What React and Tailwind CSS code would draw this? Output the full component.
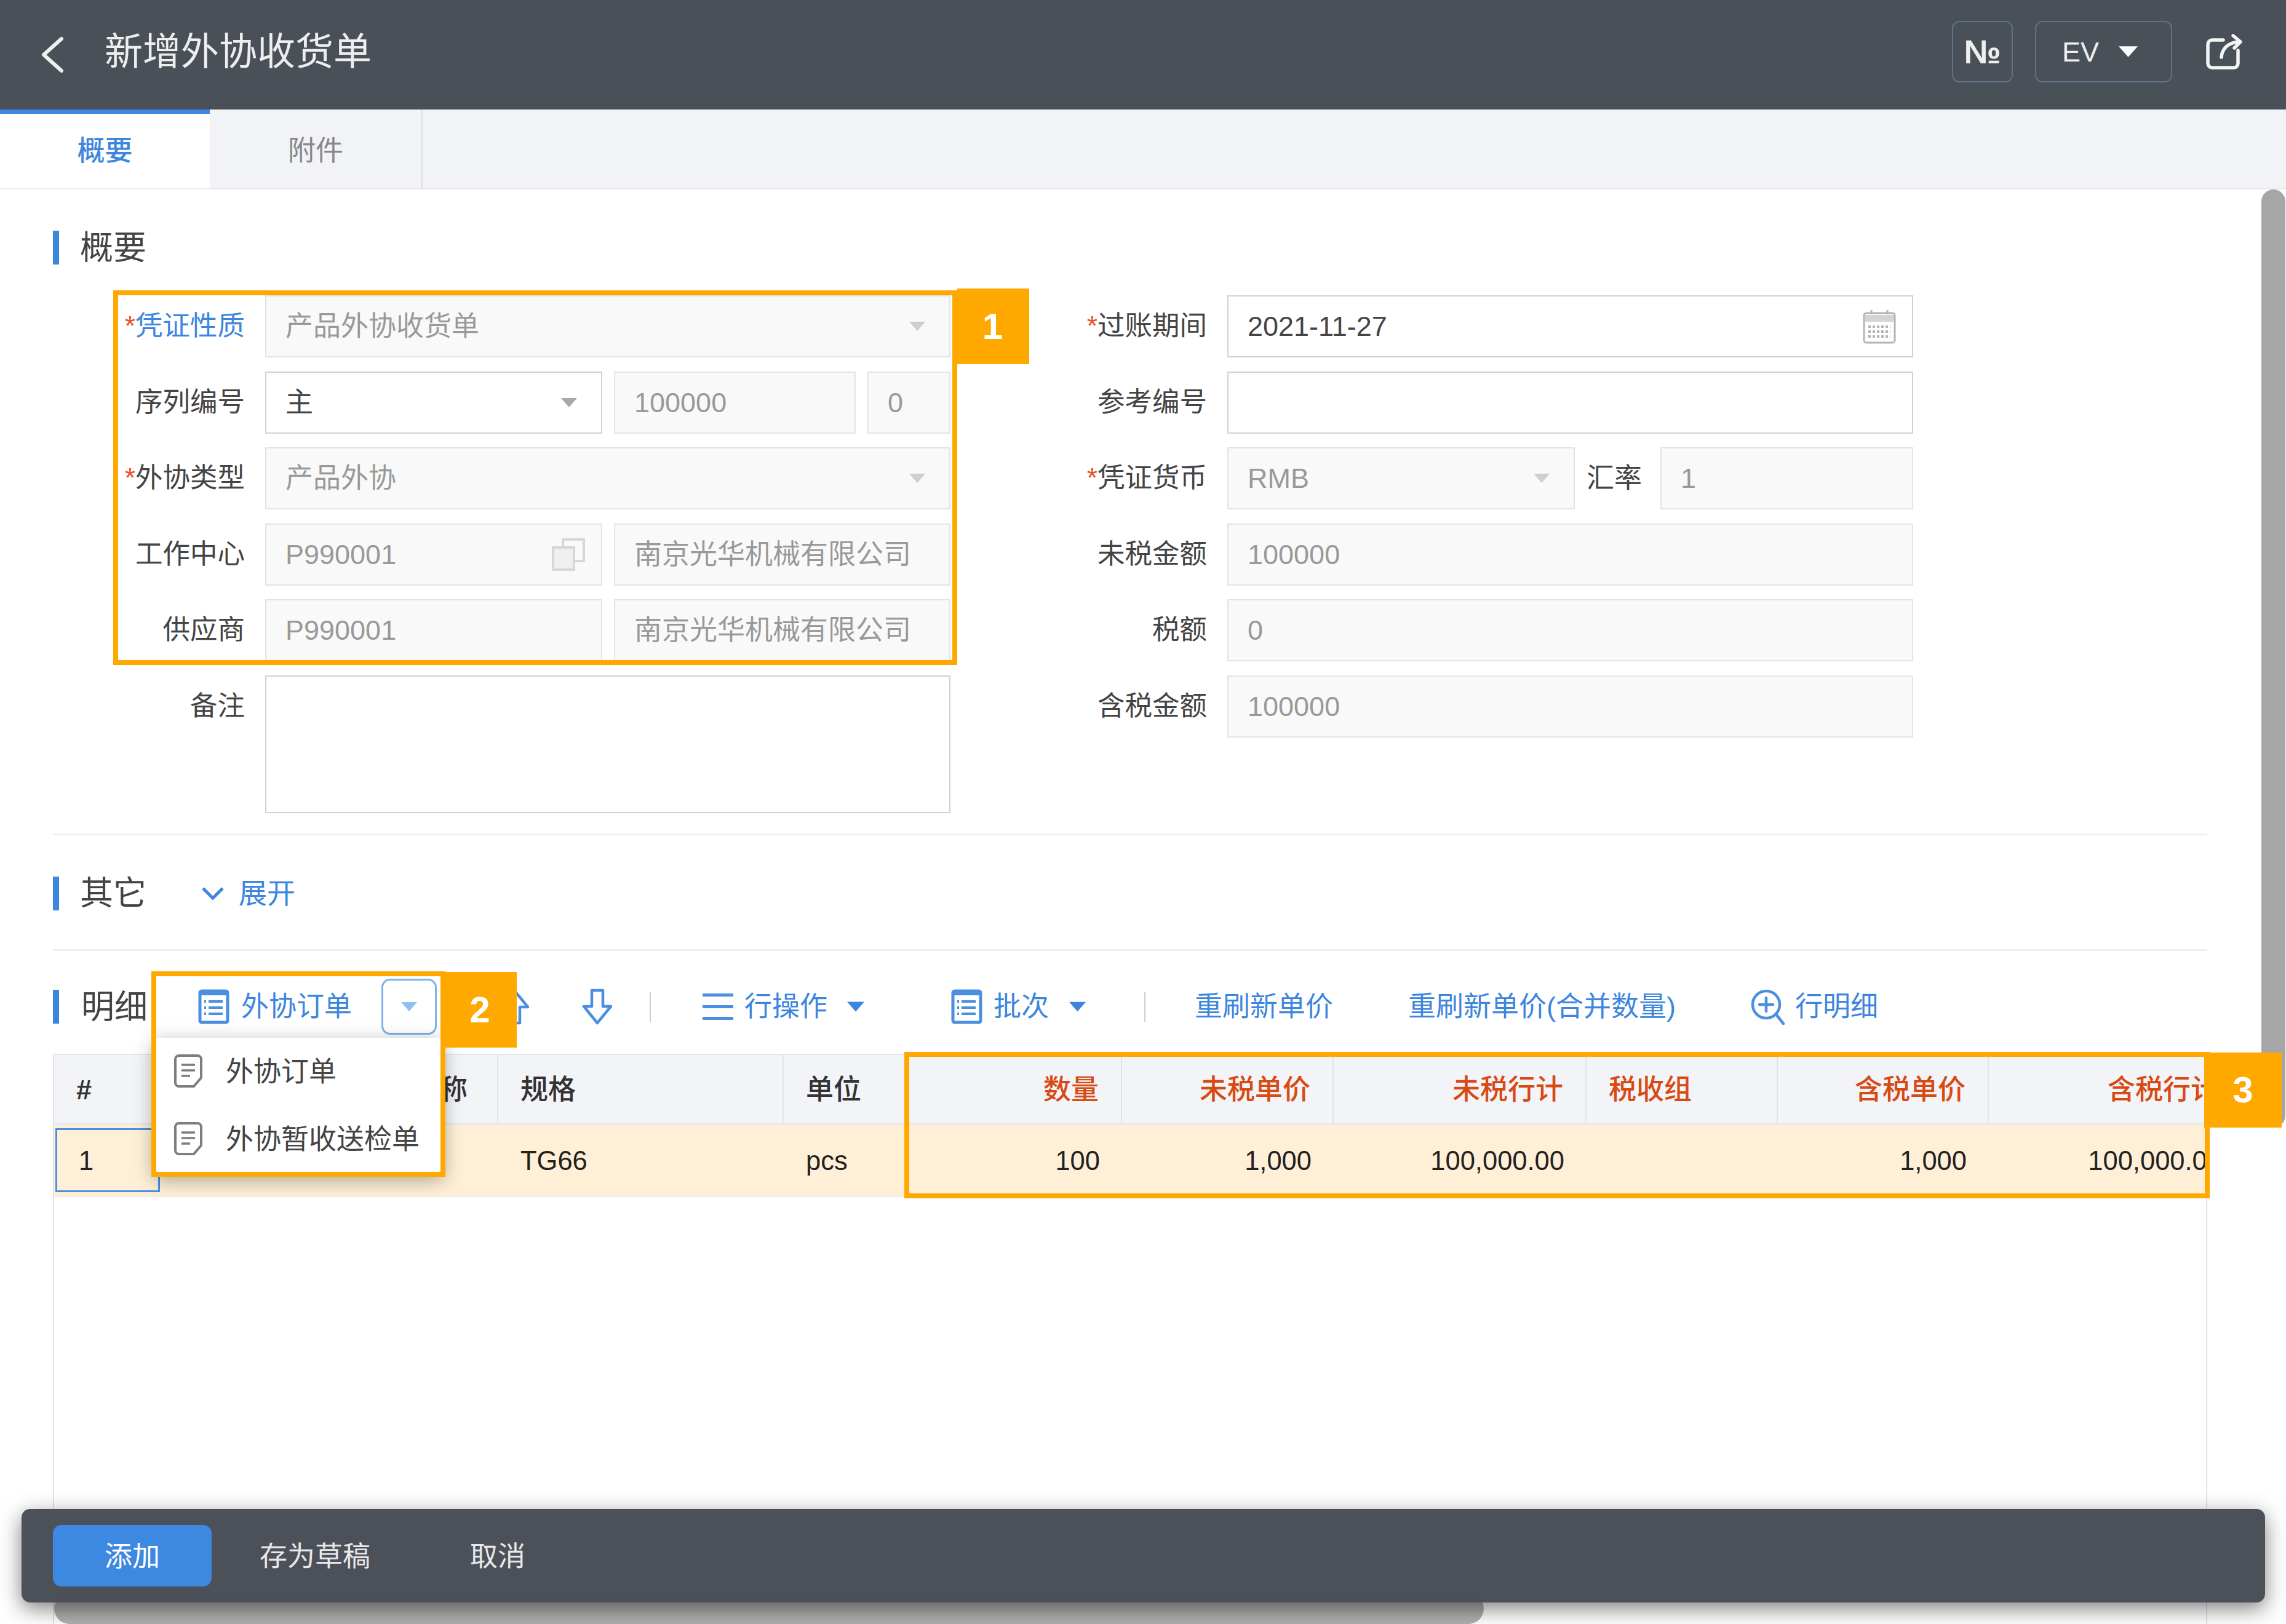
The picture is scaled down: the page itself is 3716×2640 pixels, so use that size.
import React from "react";

function Caret({ className = "" }) {
  return (
    <svg viewBox="0 0 28 16" className={className}>
      <path d="M0 0 H28 L14 16 Z" fill="currentColor" />
    </svg>
  );
}

function ListIcon({ className = "" }) {
  return (
    <svg viewBox="0 0 51 57" className={className} fill="none" stroke="#4a8fe0">
      <rect x="3" y="3" width="45" height="51" rx="3" strokeWidth="5" />
      <path d="M3 7 H48" strokeWidth="6" />
      <path d="M17 20 H40 M17 30 H40 M17 40 H40" strokeWidth="4" />
      <path d="M10 20 H13 M10 30 H13 M10 40 H13" strokeWidth="4" />
    </svg>
  );
}

function DocIcon({ className = "" }) {
  return (
    <svg viewBox="0 0 46 56" className={className} fill="none" stroke="#7d7d7d" strokeWidth="4">
      <path d="M8 2 H38 a6 6 0 0 1 6 6 V38 L32 52 H8 a6 6 0 0 1 -6 -6 V8 a6 6 0 0 1 6 -6 Z" />
      <path d="M12 17 H34 M12 26 H34 M12 35 H26" strokeWidth="3.5" />
    </svg>
  );
}

function ArrowIcon({ className = "" }) {
  return (
    <svg viewBox="0 0 50 59" className={className} fill="none" stroke="#4a8fe0" strokeWidth="4.5" strokeLinejoin="round">
      <path d="M16 3 H34 V29 H47 L25 56 L3 29 H16 Z" />
    </svg>
  );
}

function Field({ children, muted = true, caret, icon, className = "" }) {
  return (
    <div
      className={`flex h-full items-center justify-between border-2 pl-[31px] ${
        muted ? "border-[#e4e4e4] bg-[#f9f9f9] text-[#999]" : "border-[#d2d2d2] bg-white text-[#444]"
      } ${className}`}
    >
      <span className="whitespace-nowrap">{children}</span>
      {caret && (
        <Caret className={`mr-[38px] h-[15px] w-[28px] ${muted ? "text-[#cfcfcf]" : "text-[#a8a8a8]"}`} />
      )}
      {icon}
    </div>
  );
}

function Row({ label, req, blue, wide, children }) {
  return (
    <div className="flex h-[101px]">
      <div
        className={`flex shrink-0 items-center justify-end whitespace-nowrap text-[44.5px] ${wide ? "w-[350px]" : "w-[312px]"} ${
          blue ? "text-[#3d86de]" : "text-[#444]"
        }`}
      >
        {req && <span className="text-[#e8502a]">*</span>}
        {label}
      </div>
      <div className={`ml-[33px] flex gap-[19px] ${wide ? "w-[1115px]" : "w-[1114px]"}`}>{children}</div>
    </div>
  );
}

function SectionBar() {
  return <div className="h-[55px] w-[10px] shrink-0 bg-[#3d86de]" />;
}

function HeadCell({ children, className = "" }) {
  return <div className={`flex h-full shrink-0 items-center border-r-2 border-[#dfe3ea] pt-[2px] ${className}`}>{children}</div>;
}

function RowCell({ children, className = "" }) {
  return <div className={`flex h-full shrink-0 items-center pt-[5px] ${className}`}>{children}</div>;
}

export default function App() {
  return (
    <div className="relative flex h-[2640px] w-[3716px] flex-col overflow-hidden bg-white text-[45px] leading-none text-[#444] [font-family:'Liberation_Sans','Noto_Sans_CJK_SC',sans-serif]">
      {/* top bar */}
      <header className="flex h-[178px] shrink-0 items-center bg-[#4a5058] text-[#eee]">
        <svg viewBox="0 0 36 60" className="ml-[67px] h-[60px] w-[36px]" fill="none" stroke="#f0f0f0" strokeWidth="6" strokeLinecap="round" strokeLinejoin="round">
          <path d="M33 4 L4 30 L33 56" />
        </svg>
        <h1 className="mb-[8px] ml-[67px] text-[62px] font-normal">新增外协收货单</h1>
        <div className="mb-[10px] ml-auto flex items-center">
          <div className="flex h-[100px] w-[99px] items-center justify-center rounded-[12px] border-2 border-[#5f7388] text-[54px] font-bold">
            №
          </div>
          <div className="ml-[36px] flex h-[100px] w-[223px] items-center rounded-[12px] border-2 border-[#5f7388] pl-[42px]">
            EV
            <Caret className="ml-[32px] h-[18px] w-[31px] text-white" />
          </div>
          <svg viewBox="0 0 59 58" className="ml-[55px] mr-[71px] h-[58px] w-[59px]" fill="none" stroke="#f4f4f4" strokeWidth="5.5" strokeLinecap="round" strokeLinejoin="round">
            <path d="M28 10 H10 a7 7 0 0 0 -7 7 V48 a7 7 0 0 0 7 7 H45 a7 7 0 0 0 7 -7 V27" />
            <path d="M25 38 C26 24 36 14 54 13" />
            <path d="M44 3 L56 13 L46 23" />
          </svg>
        </div>
      </header>

      {/* tabs */}
      <nav className="flex h-[130px] shrink-0 border-b-2 border-[#e9eaee] bg-[#f2f3f7]">
        <div className="flex w-[341px] items-center justify-center border-t-[7px] border-[#3d86de] bg-white font-medium text-[#3d86de]">
          概要
        </div>
        <div className="flex w-[346px] items-center justify-center border-r-2 border-[#dcdee5] pt-[7px] text-[#888]">附件</div>
      </nav>

      <main className="ml-[86px] mr-[128px] flex min-h-0 flex-1 flex-col">
        <div className="mt-[67px] flex items-center">
          <SectionBar />
          <span className="ml-[34px] text-[54px] text-[#444]">概要</span>
        </div>

        {/* voucher form */}
        <div className="mt-[50px] flex">
          <div className="flex w-[1459px] shrink-0 flex-col gap-[22.5px]">
            <Row label="凭证性质" req blue>
              <Field caret className="flex-1">产品外协收货单</Field>
            </Row>
            <Row label="序列编号">
              <Field muted={false} caret className="w-[548px]">主</Field>
              <Field className="w-[393px]">100000</Field>
              <Field className="flex-1">0</Field>
            </Row>
            <Row label="外协类型" req>
              <Field caret className="flex-1">产品外协</Field>
            </Row>
            <Row label="工作中心">
              <Field
                className="w-[548px]"
                icon={
                  <svg viewBox="0 0 54 54" className="mr-[26px] h-[54px] w-[54px]" fill="none" stroke="#d8d8d8" strokeWidth="4">
                    <rect x="2" y="16" width="34" height="36" fill="#f0f0f0" />
                    <path d="M18 16 V3 H52 V38 H36" />
                  </svg>
                }
              >
                P990001
              </Field>
              <Field className="flex-1">南京光华机械有限公司</Field>
            </Row>
            <Row label="供应商">
              <Field className="w-[548px]">P990001</Field>
              <Field className="flex-1">南京光华机械有限公司</Field>
            </Row>
            <div className="flex">
              <div className="flex h-[101px] w-[312px] shrink-0 items-center justify-end text-[44.5px] text-[#444]">备注</div>
              <div className="ml-[33px] h-[224px] w-[1114px] border-2 border-[#d2d2d2]" />
            </div>
          </div>

          <div className="ml-[67px] flex flex-col gap-[22.5px]">
            <Row label="过账期间" req wide>
              <Field
                muted={false}
                className="flex-1"
                icon={
                  <svg viewBox="0 0 54 56" className="mr-[26px] h-[56px] w-[54px]" fill="none" stroke="#b4b4b4" strokeWidth="3">
                    <rect x="2" y="6" width="50" height="48" rx="4" />
                    <path d="M3 9 H51 V20 H3 Z" fill="#d4d4d4" stroke="none" />
                    <path d="M14 1 V8 M40 1 V8" />
                    <path d="M9 28 H45 M9 36 H45 M9 44 H45" strokeWidth="4" strokeDasharray="4 3" />
                  </svg>
                }
              >
                2021-11-27
              </Field>
            </Row>
            <Row label="参考编号" wide>
              <Field muted={false} className="flex-1" />
            </Row>
            <Row label="凭证货币" req wide>
              <Field caret className="w-[565px]">RMB</Field>
              <div className="flex w-[101px] shrink-0 items-center text-[#444]">汇率</div>
              <Field className="flex-1">1</Field>
            </Row>
            <Row label="未税金额" wide>
              <Field className="flex-1">100000</Field>
            </Row>
            <Row label="税额" wide>
              <Field className="flex-1">0</Field>
            </Row>
            <Row label="含税金额" wide>
              <Field className="flex-1">100000</Field>
            </Row>
          </div>
        </div>

        <div className="mt-[33px] h-[3px] shrink-0 bg-[#eeeeee]" />

        <div className="mt-[67px] flex items-center">
          <SectionBar />
          <span className="ml-[34px] text-[54px] text-[#444]">其它</span>
          <svg viewBox="0 0 38 22" className="ml-[89px] h-[22px] w-[38px]" fill="none" stroke="#3d86de" strokeWidth="5">
            <path d="M3 3 L19 19 L35 3" />
          </svg>
          <span className="ml-[23px] text-[46px] text-[#3d86de]">展开</span>
        </div>

        <div className="mt-[63px] h-[3px] shrink-0 bg-[#eeeeee]" />

        {/* detail toolbar */}
        <div className="mt-[60px] flex h-[62px] shrink-0 items-center whitespace-nowrap text-[#3d86de]">
          <SectionBar />
          <span className="ml-[36px] w-[108px] text-[54px] text-[#444]">明细</span>
          <ListIcon className="ml-[82px] h-[57px] w-[51px]" />
          <span className="ml-[19px] w-[178px]">外协订单</span>
          <div className="ml-[50px] flex h-[91px] w-[90px] items-center justify-center rounded-[14px] border-[3px] border-[#7fb1ec]">
            <Caret className="h-[15px] w-[26px] text-[#90bff0]" />
          </div>
          <ArrowIcon className="ml-[101px] h-[59px] w-[50px] rotate-180" />
          <ArrowIcon className="ml-[85px] h-[59px] w-[50px]" />
          <div className="ml-[60px] h-[48px] w-[2px] bg-[#cfcfcf]" />
          <svg viewBox="0 0 50 43" className="ml-[84px] h-[43px] w-[50px]" fill="#4a8fe0">
            <path d="M0 0 H50 V5 H0 Z M0 19 H50 V24 H0 Z M0 38 H50 V43 H0 Z" />
          </svg>
          <span className="ml-[18px] w-[135px]">行操作</span>
          <Caret className="ml-[32px] h-[17px] w-[28px] text-[#3d86de]" />
          <ListIcon className="ml-[141px] h-[57px] w-[51px]" />
          <span className="ml-[18px] w-[90px]">批次</span>
          <Caret className="ml-[33px] h-[17px] w-[27px] text-[#3d86de]" />
          <div className="ml-[95px] h-[48px] w-[2px] bg-[#cfcfcf]" />
          <span className="ml-[80px] w-[225px]">重刷新单价</span>
          <span className="ml-[122px] w-[435px]">重刷新单价(合并数量)</span>
          <svg viewBox="0 0 56 59" className="ml-[121px] h-[59px] w-[56px]" fill="none" stroke="#4a8fe0" strokeWidth="4.5" strokeLinecap="round">
            <circle cx="26" cy="26" r="22" />
            <path d="M26 15 V37 M15 26 H37 M42 42 L54 57" />
          </svg>
          <span className="ml-[17px]">行明细</span>
        </div>

        {/* detail table */}
        <div className="mt-[45px] min-h-0 flex-1 overflow-hidden border-x-2 border-[#dfe3ea]">
          <div className="flex h-[115px] w-[3650px] items-center border-y-2 border-[#e3e6ec] bg-[#f2f4f8] font-medium text-[#333]">
            <HeadCell className="w-[172px] pl-[36px] font-bold">#</HeadCell>
            <HeadCell className="w-[550px] justify-end pr-[48px]">名称</HeadCell>
            <HeadCell className="w-[464px] pl-[36px]">规格</HeadCell>
            <HeadCell className="w-[204px] pl-[36px]">单位</HeadCell>
            <HeadCell className="w-[346px] justify-end pr-[36px] text-[#d84a12]">数量</HeadCell>
            <HeadCell className="w-[344px] justify-end pr-[36px] text-[#d84a12]">未税单价</HeadCell>
            <HeadCell className="w-[411px] justify-end pr-[36px] text-[#d84a12]">未税行计</HeadCell>
            <HeadCell className="w-[311px] pl-[36px] text-[#d84a12]">税收组</HeadCell>
            <HeadCell className="w-[343px] justify-end pr-[36px] text-[#d84a12]">含税单价</HeadCell>
            <HeadCell className="w-[411px] justify-end border-r-0 pr-[36px] text-[#d84a12]">含税行计</HeadCell>
          </div>
          <div className="flex h-[118px] w-[3650px] items-center border-b-2 border-[#eee] bg-[#feefd6] text-[43.5px] text-[#222]">
            <div className="flex h-full w-[172px] shrink-0 items-center py-[6px] pl-[2px]">
              <div className="flex h-full w-full items-center border-[3px] border-[#4a90e2] pl-[35px] pt-[5px]">1</div>
            </div>
            <RowCell className="w-[550px]" />
            <RowCell className="w-[464px] pl-[36px]">TG66</RowCell>
            <RowCell className="w-[204px] pl-[36px]">pcs</RowCell>
            <RowCell className="w-[346px] justify-end pr-[36px]">100</RowCell>
            <RowCell className="w-[344px] justify-end pr-[36px]">1,000</RowCell>
            <RowCell className="w-[411px] justify-end pr-[36px]">100,000.00</RowCell>
            <RowCell className="w-[311px]" />
            <RowCell className="w-[343px] justify-end pr-[36px]">1,000</RowCell>
            <RowCell className="w-[411px] justify-end pr-[32px]">100,000.00</RowCell>
          </div>
        </div>
      </main>

      {/* scrollbars */}
      <div className="absolute left-[3676px] top-[308px] h-[1525px] w-[39px] rounded-full bg-[#a6a6a6]" />
      <div className="absolute left-[88px] top-[2590px] h-[50px] w-[2324px] rounded-full bg-[#b0b0b0]" />

      {/* dropdown menu */}
      <div className="absolute left-[250px] top-[1687px] flex h-[222px] w-[470px] flex-col bg-white text-[#444] shadow-[0_8px_30px_rgba(0,0,0,0.35)]">
        <div className="flex h-[110px] items-center pl-[33px]">
          <DocIcon className="h-[56px] w-[46px]" />
          <span className="ml-[38px]">外协订单</span>
        </div>
        <div className="flex h-[110px] items-center pl-[33px]">
          <DocIcon className="h-[56px] w-[46px]" />
          <span className="ml-[38px]">外协暂收送检单</span>
        </div>
      </div>

      {/* callouts */}
      <div className="absolute left-[184px] top-[472px] h-[609px] w-[1372px] border-[8px] border-[#ffa800]" />
      <div className="absolute left-[1556px] top-[469px] flex h-[123px] w-[117px] items-center justify-center bg-[#ffa800] pr-[2px] text-[60px] font-bold text-white">1</div>
      <div className="absolute left-[246px] top-[1579px] h-[334px] w-[478px] border-[8px] border-[#ffa800]" />
      <div className="absolute left-[724px] top-[1580px] flex h-[123px] w-[116px] items-center justify-center bg-[#ffa800] pr-[4px] text-[60px] font-bold text-white">2</div>
      <div className="absolute left-[1470px] top-[1710px] h-[238px] w-[2122px] border-[8px] border-[#ffa800]" />
      <div className="absolute left-[3583px] top-[1711px] flex h-[122px] w-[126px] items-center justify-center bg-[#ffa800] text-[60px] font-bold text-white">3</div>

      {/* action bar */}
      <div className="absolute left-[35px] top-[2453px] flex h-[152px] w-[3647px] items-center rounded-[14px] bg-[#484e56]/98 text-[#e8e8e8] shadow-[0_10px_34px_rgba(0,0,0,0.5)]">
        <button className="ml-[51px] h-[100px] w-[258px] rounded-[14px] bg-[#3d88e0] pt-[2px] text-white">添加</button>
        <span className="ml-[78px] pt-[2px]">存为草稿</span>
        <span className="ml-[162px] pt-[2px]">取消</span>
      </div>
    </div>
  );
}
